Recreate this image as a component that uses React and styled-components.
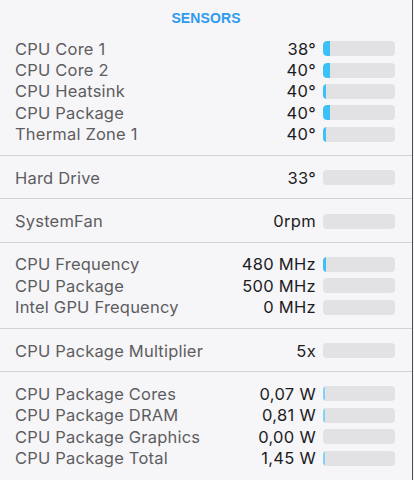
import React from 'react';
import styled, { createGlobalStyle } from 'styled-components';

const GlobalStyle = createGlobalStyle`
  html, body {
    margin: 0;
    padding: 0;
    background: #f6f5f8;
  }
  body {
    font-family: Inter, "Liberation Sans", Arial, sans-serif;
    -webkit-font-smoothing: antialiased;
  }
`;

const Panel = styled.div`
  width: 413px;
  height: 480px;
  box-sizing: border-box;
  background: #f6f5f8;
  border-right: 1px solid #4a4a4a;
  overflow: hidden;
`;

const Title = styled.div`
  height: 27px;
  display: flex;
  align-items: center;
  justify-content: center;
  padding-top: 8px;
  box-sizing: border-box;
  color: #2f9bef;
  font-family: "Liberation Sans", Arial, sans-serif;
  font-weight: 700;
  font-size: 14px;
  letter-spacing: 0.1px;
`;

const Section = styled.div`
  padding: 11px 0 10px;
  border-bottom: ${p => (p.$last ? 'none' : '1px solid #d3d2d6')};
`;

const Row = styled.div`
  height: 21.4px;
  display: grid;
  grid-template-columns: 1fr auto 72px;
  align-items: center;
  column-gap: 7px;
  padding: 0 17px 0 15px;
`;

const Label = styled.span`
  color: #5d5d60;
  font-size: 16.5px;
  letter-spacing: 0.2px;
  white-space: nowrap;
`;

const Value = styled.span`
  color: #1c1c1e;
  font-size: 16.5px;
  letter-spacing: 0.3px;
  text-align: right;
  white-space: nowrap;
`;

const Bar = styled.div`
  height: 15px;
  border-radius: 4px;
  background: #e2e1e4;
  overflow: hidden;
  display: flex;
`;

const Fill = styled.div`
  height: 100%;
  background: ${p => (p.$light ? '#7fd3f5' : '#3ac1f6')};
  border-radius: 4px 0 0 4px;
`;

const sections = [
  [
    ['CPU Core 1', '38°', 7],
    ['CPU Core 2', '40°', 7],
    ['CPU Heatsink', '40°', 3],
    ['CPU Package', '40°', 7],
    ['Thermal Zone 1', '40°', 3],
  ],
  [['Hard Drive', '33°', 0]],
  [['SystemFan', '0rpm', 0]],
  [
    ['CPU Frequency', '480 MHz', 3],
    ['CPU Package', '500 MHz', 0],
    ['Intel GPU Frequency', '0 MHz', 0],
  ],
  [['CPU Package Multiplier', '5x', 0]],
  [
    ['CPU Package Cores', '0,07 W', 2, true],
    ['CPU Package DRAM', '0,81 W', 2, true],
    ['CPU Package Graphics', '0,00 W', 0],
    ['CPU Package Total', '1,45 W', 2, true],
  ],
];

const App = () => {
  return (
    <Panel>
      <GlobalStyle />
      <Title>SENSORS</Title>
      {sections.map((rows, i) => (
        <Section key={i} $last={i === sections.length - 1}>
          {rows.map(([label, value, fill, light]) => (
            <Row key={label + value}>
              <Label>{label}</Label>
              <Value>{value}</Value>
              <Bar>
                {fill > 0 && <Fill $light={light} style={{ width: fill }} />}
              </Bar>
            </Row>
          ))}
        </Section>
      ))}
    </Panel>
  );
};

export default App;
